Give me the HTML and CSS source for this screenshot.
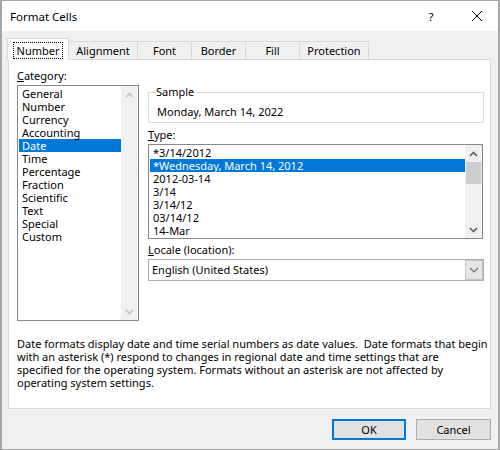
FILE: index.html
```html
<!DOCTYPE html>
<html>
<head>
<meta charset="utf-8">
<link rel="stylesheet" href="styles.css">
</head>
<body>
<div class="window">
  <div class="titlebar">
    <span class="title">Format Cells</span>
    <span class="help">?</span>
    <svg class="close" width="12" height="12" viewBox="0 0 12 12"><path d="M1 1 L11 11 M11 1 L1 11" stroke="#000" stroke-width="1"/></svg>
  </div>
  <div class="main">
    <div class="tabs">
      <div class="tab sel w-number"><span class="focus">Number</span></div>
      <div class="tab w-align">Alignment</div>
      <div class="tab w-font">Font</div>
      <div class="tab w-border">Border</div>
      <div class="tab w-fill">Fill</div>
      <div class="tab w-prot">Protection</div>
    </div>
    <div class="panel">
      <div class="cols">
        <div class="leftcol">
          <div class="label"><u>C</u>ategory:</div>
          <div class="list catlist">
            <div class="items">
              <div class="item">General</div>
              <div class="item">Number</div>
              <div class="item">Currency</div>
              <div class="item">Accounting</div>
              <div class="item selected">Date</div>
              <div class="item">Time</div>
              <div class="item">Percentage</div>
              <div class="item">Fraction</div>
              <div class="item">Scientific</div>
              <div class="item">Text</div>
              <div class="item">Special</div>
              <div class="item">Custom</div>
            </div>
            <div class="sb">
              <div class="sbbtn"><svg width="9" height="6" viewBox="0 0 9 6"><path d="M1 5 L4.5 1.5 L8 5" fill="none" stroke="#c3c3c3" stroke-width="1.6"/></svg></div>
              <div class="sbbtn"><svg width="9" height="6" viewBox="0 0 9 6"><path d="M1 1 L4.5 4.5 L8 1" fill="none" stroke="#c3c3c3" stroke-width="1.6"/></svg></div>
            </div>
          </div>
        </div>
        <div class="rightcol">
          <fieldset class="sample">
            <legend>Sample</legend>
            <div class="sampletext">Monday, March 14, 2022</div>
          </fieldset>
          <div class="label typelabel"><u>T</u>ype:</div>
          <div class="list typelist">
            <div class="items">
              <div class="item">*3/14/2012</div>
              <div class="item selected">*Wednesday, March 14, 2012</div>
              <div class="item">2012-03-14</div>
              <div class="item">3/14</div>
              <div class="item">3/14/12</div>
              <div class="item">03/14/12</div>
              <div class="item">14-Mar</div>
            </div>
            <div class="sb">
              <div class="sbbtn"><svg width="9" height="6" viewBox="0 0 9 6"><path d="M1 5 L4.5 1.5 L8 5" fill="none" stroke="#606060" stroke-width="1.6"/></svg></div>
              <div class="thumb"></div>
              <div class="spacer"></div>
              <div class="sbbtn"><svg width="9" height="6" viewBox="0 0 9 6"><path d="M1 1 L4.5 4.5 L8 1" fill="none" stroke="#606060" stroke-width="1.6"/></svg></div>
            </div>
          </div>
          <div class="label localelabel"><u>L</u>ocale (location):</div>
          <div class="dropdown">
            <div class="ddtext">English (United States)</div>
            <div class="ddbtn"><svg width="10" height="6" viewBox="0 0 10 6"><path d="M1 1 L5 5 L9 1" fill="none" stroke="#707070" stroke-width="1.1"/></svg></div>
          </div>
        </div>
      </div>
      <div class="desc">Date formats display date and time serial numbers as date values.&nbsp; Date formats that begin<br>with an asterisk (*) respond to changes in regional date and time settings that are<br>specified for the operating system. Formats without an asterisk are not affected by<br>operating system settings.</div>
    </div>
    <div class="buttons">
      <div class="btn ok">OK</div>
      <div class="btn">Cancel</div>
    </div>
  </div>
</div>
</body>
</html>
```

FILE: styles.css
```css
html, body {
  margin: 0;
  padding: 0;
}
body {
  width: 500px;
  height: 450px;
  overflow: hidden;
  font-family: "Noto Sans", "Liberation Sans", sans-serif;
  font-size: 11px;
  color: #000;
}
.window {
  box-sizing: border-box;
  width: 500px;
  height: 450px;
  border: 1px solid #a6a6a6;
  border-width: 1px 2px 1px 2px;
  background: #f0f0f0;
  display: flex;
  flex-direction: column;
}
.titlebar {
  height: 30px;
  background: #fff;
  display: flex;
  align-items: center;
  padding-left: 8px;
}
.title {
  flex: 1;
  font-size: 11.5px;
  line-height: 14px;
  padding-top: 1px;
}
.help {
  width: 14px;
  text-align: center;
  font-size: 11.5px;
  margin-right: 33px;
  padding-top: 1px;
}
.close {
  margin-right: 15px;
}
.main {
  flex: 1;
  display: flex;
  flex-direction: column;
}
.tabs {
  display: flex;
  align-items: flex-end;
  margin-top: 7px;
  margin-left: 5px;
  height: 21px;
}
.tab {
  box-sizing: border-box;
  height: 18px;
  border-top: 1px solid #d9d9d9;
  border-right: 1px solid #d9d9d9;
  background: #f0f0f0;
  text-align: center;
  line-height: 17px;
}
.tab.sel {
  height: 22px;
  margin-bottom: -1px;
  border-left: 1px solid #d9d9d9;
  background: #fff;
  position: relative;
  z-index: 1;
  padding-top: 3px;
}
.focus {
  display: inline-block;
  outline: 1px dotted #000;
  padding: 0 3px;
  line-height: 15px;
}
.w-number { width: 62px; }
.w-align { width: 69px; }
.w-font { width: 54px; }
.w-border { width: 54px; }
.w-fill { width: 54px; }
.w-prot { width: 69px; }
.panel {
  box-sizing: border-box;
  margin-left: 6px;
  width: 483px;
  height: 350px;
  border: 1px solid #d9d9d9;
  background: #fff;
  padding: 9px 0 0 8px;
}
.cols {
  display: flex;
  gap: 9px;
}
.leftcol {
  width: 122px;
  display: flex;
  flex-direction: column;
}
.rightcol {
  width: 336px;
  display: flex;
  flex-direction: column;
  margin-top: 16px;
}
.label {
  line-height: 14px;
  height: 14px;
  margin-bottom: 2px;
}
.list {
  box-sizing: border-box;
  border: 1px solid #828790;
  display: flex;
  overflow: hidden;
  background: #fff;
}
.catlist {
  height: 236px;
}
.items {
  flex: 1;
  padding: 1px 0 0 1px;
  min-width: 0;
}
.item {
  height: 13px;
  line-height: 13px;
  padding-left: 3px;
  white-space: nowrap;
}
.item.selected {
  background: #0078d7;
  color: #fff;
}
.sb {
  width: 17px;
  background: #f0f0f0;
  display: flex;
  flex-direction: column;
  justify-content: space-between;
}
.sbbtn {
  height: 17px;
  display: flex;
  align-items: center;
  justify-content: center;
}
.thumb {
  height: 22px;
  background: #cdcdcd;
  margin: 0 1px;
}
.spacer {
  flex: 1;
}
.sample {
  box-sizing: border-box;
  margin: 0;
  height: 38px;
  border: 1px solid #dcdcdc;
  padding: 6px 6px 0 6px;
}
.sample legend {
  padding: 0 1px;
  line-height: 14px;
}
.sampletext {
  line-height: 13px;
  padding-left: 2px;
}
.typelabel {
  margin-top: 5px;
}
.typelist {
  height: 95px;
  width: 335px;
}
.localelabel {
  margin-top: 4px;
}
.dropdown {
  box-sizing: border-box;
  width: 336px;
  height: 22px;
  border: 1px solid #adadad;
  display: flex;
}
.ddtext {
  flex: 1;
  line-height: 20px;
  padding-left: 3px;
}
.ddbtn {
  box-sizing: border-box;
  width: 18px;
  background: #e5e5e5;
  border: 1px solid #c2c2c2;
  display: flex;
  align-items: center;
  justify-content: center;
}
.desc {
  margin-top: 16px;
  line-height: 13px;
  white-space: nowrap;
}
.buttons {
  display: flex;
  justify-content: flex-end;
  gap: 10px;
  margin-top: 10px;
  padding-right: 7px;
}
.btn {
  box-sizing: border-box;
  width: 75px;
  height: 21px;
  border: 1px solid #adadad;
  background: #e1e1e1;
  text-align: center;
  line-height: 19px;
}
.btn.ok {
  width: 74px;
  border: 2px solid #0078d7;
  line-height: 17px;
}
```
